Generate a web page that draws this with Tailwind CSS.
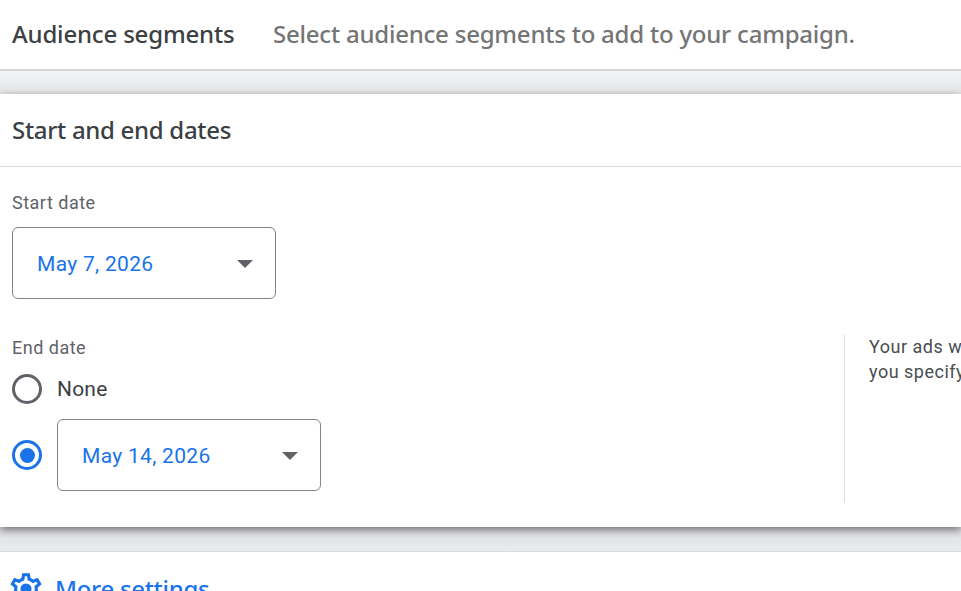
<!DOCTYPE html>
<html>
<head>
<meta charset="utf-8">
<script src="https://cdn.jsdelivr.net/npm/@tailwindcss/browser@4"></script>
</head>
<body class="w-[961px] h-[591px] overflow-hidden bg-white font-['Roboto',sans-serif]">
  <!-- collapsed audience row -->
  <div class="h-[71px] flex items-center pl-3 pb-[2px] border-b-2 border-[#d3d5d8]">
    <div class="w-[261px] text-[24px] font-medium tracking-[-0.18px] text-[#3c4043] whitespace-nowrap font-['Noto_Sans',sans-serif]">Audience segments</div>
    <div class="text-[24px] font-medium tracking-[-0.22px] text-[#757575] whitespace-nowrap font-['Noto_Sans',sans-serif]">Select audience segments to add to your campaign.</div>
  </div>
  <div class="h-[23px] bg-gradient-to-b from-[#f1f3f4] to-[#e4e5e7]"></div>

  <!-- expanded dates card -->
  <div class="relative h-[433px] bg-white shadow-[0_3px_8px_rgba(0,0,0,0.5)]">
    <div class="h-[73px] flex items-center pl-3 pb-[1px] border-b border-[#dadce0]">
      <div class="text-[24px] font-medium tracking-[-0.3px] text-[#3c4043] font-['Noto_Sans',sans-serif]">Start and end dates</div>
    </div>
    <div class="flex justify-between pl-3 pt-[24px]">
      <div class="w-[832px]">
        <div class="h-6 text-[18px] leading-6 tracking-[0.5px] text-[#5f6368]">Start date</div>
        <div class="mt-[12px] w-[264px] h-[72px] border border-[#80868b] rounded-md flex items-center justify-between pl-6 pr-[22px]">
          <span class="text-[21px] tracking-[0.3px] text-[#1a73e8] pt-[4px]">May 7, 2026</span>
          <svg class="mt-[2px]" width="16" height="8" viewBox="0 0 16 8"><path d="M0 0h16L8 8z" fill="#5f6368"/></svg>
        </div>
        <div class="mt-[37px] h-6 text-[18px] leading-6 tracking-[0.5px] text-[#5f6368]">End date</div>
        <div class="mt-[14px] flex items-center gap-[15px] h-[30px]">
          <div class="w-[30px] h-[30px] rounded-full border-[3px] border-[#5f6368]"></div>
          <span class="text-[21px] tracking-[0.2px] text-[#3c4043] pt-[2px]">None</span>
        </div>
        <div class="mt-[15px] flex items-center gap-[15px]">
          <div class="w-[30px] h-[30px] rounded-full border-[3px] border-[#1a73e8] flex items-center justify-center">
            <div class="w-[15px] h-[15px] rounded-full bg-[#1a73e8]"></div>
          </div>
          <div class="w-[264px] h-[72px] border border-[#80868b] rounded-md flex items-center justify-between pl-6 pr-[22px]">
            <span class="text-[21px] tracking-[0.3px] text-[#1a73e8] pt-[4px]">May 14, 2026</span>
            <svg class="mt-[2px]" width="16" height="8" viewBox="0 0 16 8"><path d="M0 0h16L8 8z" fill="#5f6368"/></svg>
          </div>
        </div>
      </div>
      <div class="mt-[144px] h-[168px] border-l border-[#dadce0] pl-6 flex-1 overflow-hidden">
        <div class="text-[18px] leading-[25px] tracking-[0.5px] text-[#4a4d50] whitespace-nowrap -mt-[1px]">Your ads will run until the end date<br>you specify</div>
      </div>
    </div>
  </div>

  <div class="h-[25px] bg-gradient-to-b from-[#e0e1e3] to-[#e8eaed] border-b border-[#dadce0]"></div>
  <div class="flex items-center gap-[10px] pl-[7px] pt-[18px]">
    <svg width="38" height="38" viewBox="0 0 24 24" fill="#1a73e8"><path d="M19.43 12.98c.04-.32.07-.64.07-.98 0-.34-.03-.66-.07-.98l2.11-1.65c.19-.15.24-.42.12-.64l-2-3.46c-.09-.16-.26-.25-.44-.25-.06 0-.12.01-.17.03l-2.49 1c-.52-.4-1.08-.73-1.69-.98l-.38-2.65C14.46 2.18 14.25 2 14 2h-4c-.25 0-.46.18-.49.42l-.38 2.65c-.61.25-1.17.59-1.69.98l-2.49-1c-.06-.02-.12-.03-.18-.03-.17 0-.34.09-.43.25l-2 3.46c-.13.22-.07.49.12.64l2.11 1.65c-.04.32-.07.65-.07.98 0 .33.03.66.07.98l-2.11 1.65c-.19.15-.24.42-.12.64l2 3.46c.09.16.26.25.44.25.06 0 .12-.01.17-.03l2.49-1c.52.4 1.08.73 1.69.98l.38 2.65c.03.24.24.42.49.42h4c.25 0 .46-.18.49-.42l.38-2.65c.61-.25 1.17-.59 1.69-.98l2.49 1c.06.02.12.03.18.03.17 0 .34-.09.43-.25l2-3.46c.12-.22.07-.49-.12-.64l-2.11-1.65zm-1.98-1.71c.04.31.05.52.05.73 0 .21-.02.43-.05.73l-.14 1.13.89.7 1.08.84-.7 1.21-1.27-.51-1.04-.42-.9.68c-.43.32-.84.56-1.25.73l-1.06.43-.16 1.13-.2 1.35h-1.4l-.19-1.35-.16-1.13-1.06-.43c-.43-.18-.83-.41-1.23-.71l-.91-.7-1.06.43-1.27.51-.7-1.21 1.08-.84.89-.7-.14-1.13c-.03-.31-.05-.54-.05-.74s.02-.43.05-.73l.14-1.13-.89-.7-1.08-.84.7-1.21 1.27.51 1.04.42.9-.68c.43-.32.84-.56 1.25-.73l1.06-.43.16-1.13.2-1.35h1.39l.19 1.35.16 1.13 1.06.43c.43.18.83.41 1.23.71l.91.7 1.06-.43 1.27-.51.7 1.21-1.07.85-.89.7.14 1.13z"/><circle cx="12" cy="12" r="3.500"/></svg>
    <span class="text-[24px] font-medium tracking-[-0.3px] text-[#1a73e8] font-['Noto_Sans',sans-serif]">More settings</span>
  </div>
</body>
</html>
